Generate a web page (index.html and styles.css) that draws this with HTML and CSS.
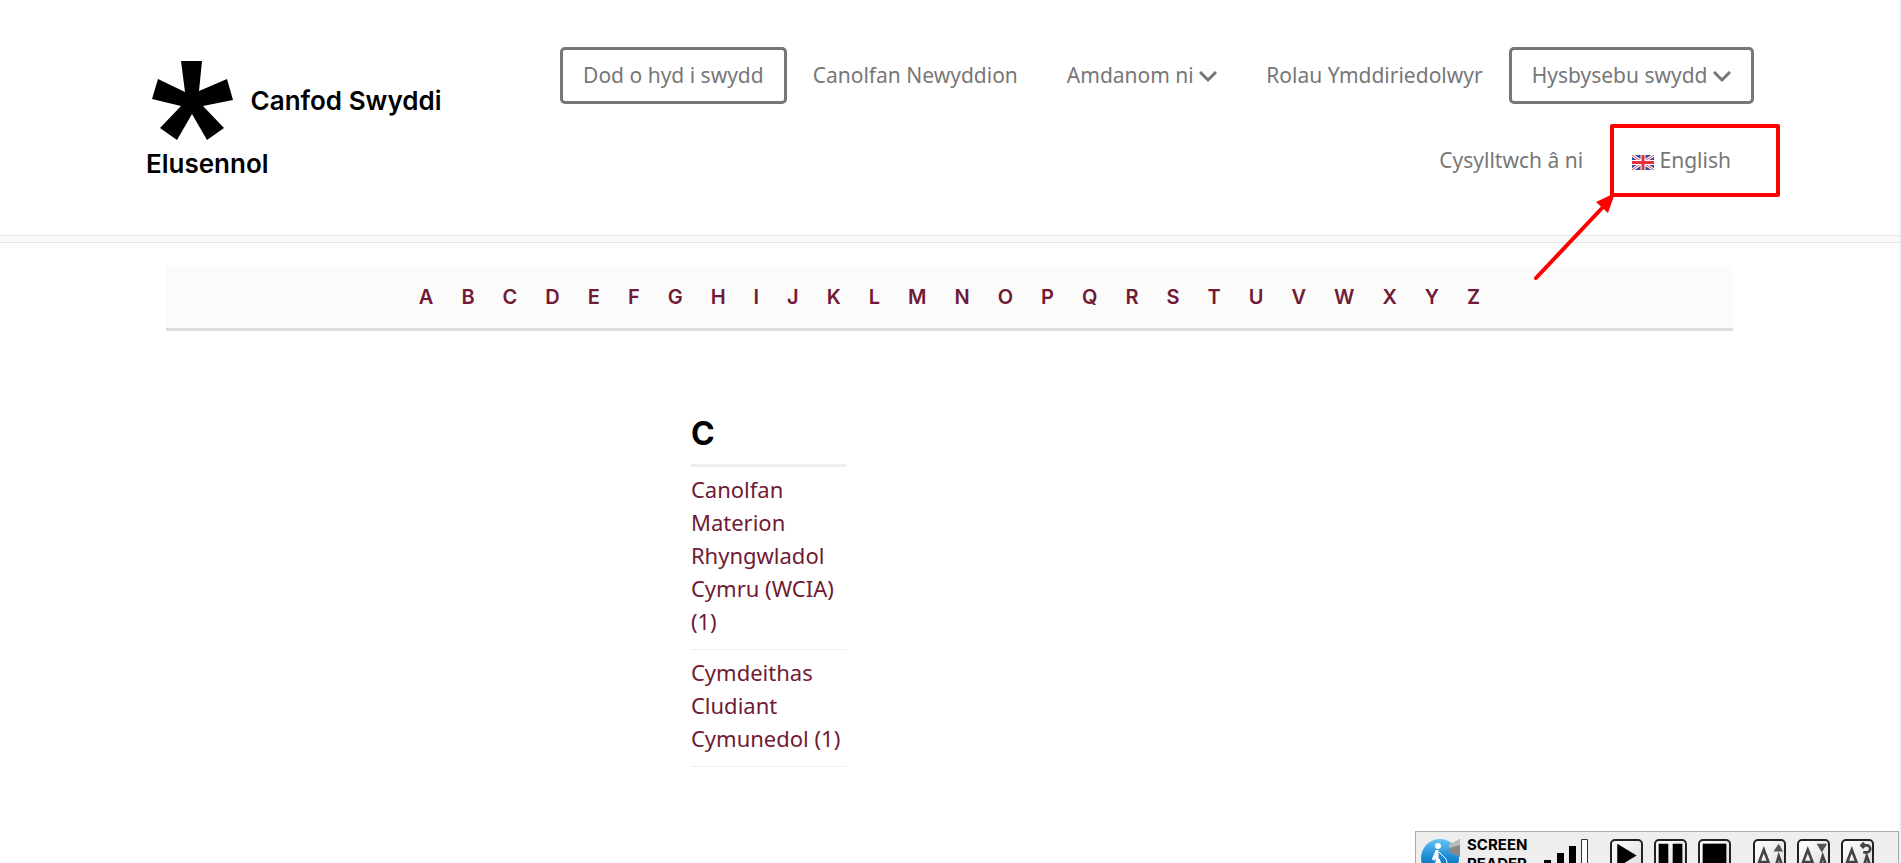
FILE: index.html
```html
<!DOCTYPE html>
<html lang="cy">
<head>
<meta charset="utf-8">
<title>Canfod Swyddi Elusennol</title>
<link rel="stylesheet" href="styles.css">
</head>
<body>
<header class="site-header">
  <div class="header-inner">
    <a class="brand" href="#">
      <svg class="brand-mark" viewBox="0 0 90 90" aria-hidden="true"><path d="M35 7h21l-3 30 28-12 6 21-30 6 21 22-17 12-15-26-15 26-17-12 21-22-29-7 6-20 27 13z"/></svg>
      <span>Canfod Swyddi</span> <span>Elusennol</span>
    </a>
    <nav class="main-nav" aria-label="Prif ddewislen">
      <a class="nav-link boxed" href="#">Dod o hyd i swydd</a>
      <a class="nav-link" href="#">Canolfan Newyddion</a>
      <a class="nav-link" href="#">Amdanom ni <svg class="chevron" viewBox="0 0 18 12" aria-hidden="true"><path d="M1 1l8 8 8-8"/></svg></a>
      <a class="nav-link" href="#">Rolau Ymddiriedolwyr</a>
      <a class="nav-link boxed" href="#">Hysbysebu swydd <svg class="chevron" viewBox="0 0 18 12" aria-hidden="true"><path d="M1 1l8 8 8-8"/></svg></a>
      <a class="nav-link" href="#">Cysylltwch â ni</a>
      <a class="nav-link" href="#"><svg class="flag" viewBox="0 0 22 15" aria-hidden="true"><path fill="#3a4a9c" d="M0 0h22v15H0z"/><path stroke="#fff" stroke-width="3" d="M0 0l22 15M22 0L0 15"/><path stroke="#e8505b" d="M0 0l22 15M22 0L0 15"/><path stroke="#fff" stroke-width="5" d="M11 0v15M0 7.500h22"/><path stroke="#e6303c" stroke-width="3" d="M11 0v15M0 7.500h22"/></svg> English</a>
    </nav>
  </div>
</header>
<main class="page">
  <nav class="letters" aria-label="A–Z">
    <a href="#">A</a><a href="#">B</a><a href="#">C</a><a href="#">D</a><a href="#">E</a><a href="#">F</a><a href="#">G</a><a href="#">H</a><a href="#">I</a><a href="#">J</a><a href="#">K</a><a href="#">L</a><a href="#">M</a><a href="#">N</a><a href="#">O</a><a href="#">P</a><a href="#">Q</a><a href="#">R</a><a href="#">S</a><a href="#">T</a><a href="#">U</a><a href="#">V</a><a href="#">W</a><a href="#">X</a><a href="#">Y</a><a href="#">Z</a>
  </nav>
  <section class="directory">
    <div class="group">
      <h2>C</h2>
      <ul>
        <li><a href="#">Canolfan Materion Rhyngwladol Cymru (WCIA) (1)</a></li>
        <li><a href="#">Cymdeithas Cludiant Cymunedol (1)</a></li>
      </ul>
    </div>
  </section>
</main>
<svg class="callout" viewBox="0 0 250 160" aria-hidden="true"><path fill="none" stroke="#f00" stroke-width="4" stroke-linejoin="round" d="M82 4h166v69H82z"/><path stroke="#f00" stroke-width="4" stroke-linecap="round" d="M6 156L74 84"/><path fill="#f00" d="M85 71l-19 9 12 11z"/></svg>
<aside class="reader" aria-label="Screen reader">
  <svg class="reader-logo" viewBox="0 0 40 40" aria-hidden="true"><defs><linearGradient id="g" x2="0" y2="1"><stop stop-color="#6cc4f2"/><stop offset=".5" stop-color="#1688d4"/><stop offset="1" stop-color="#0b63ad"/></linearGradient></defs><circle cx="19" cy="19" r="19" fill="url(#g)"/><path fill="#888" d="M28 6l11-6v18l-11-5z"/><path fill="#bbb" d="M28 6l11-6v6l-11 3z"/><circle cx="17" cy="7" r="3" fill="#fff"/><path fill="none" stroke="#fff" stroke-width="3" d="M16 11v12l-4 12M17 20l6 14M16 12l-4 9"/><path fill="none" stroke="#fff" d="M18 13l7 7 4 14"/></svg>
  <span class="reader-title">SCREEN READER</span>
  <svg class="volume" viewBox="0 0 45 40" aria-hidden="true"><path d="M0 21h7v19H0zM13 14h7v26h-7zM25 7h7v33h-7z"/><path fill="#fff" stroke="#333" d="M37.500.500h6v39h-6z"/></svg>
  <div class="tools">
    <button type="button" aria-label="Play"><svg viewBox="0 0 33 33"><path d="M6 3l22 13.500L6 30z"/></svg></button>
    <button type="button" aria-label="Pause"><svg viewBox="0 0 33 33"><path d="M3 3h11v27H3zM19 3h11v27H19z"/></svg></button>
    <button type="button" aria-label="Stop"><svg viewBox="0 0 33 33"><path d="M3 3h27v27H3z"/></svg></button>
  </div>
  <div class="tools">
    <button type="button" aria-label="Larger text"><svg viewBox="0 0 33 33"><path class="line" d="M2 31l8-21 8 21M5 24h10M23 31l4-14 5 14M24 26h7"/><path class="soft" d="M21 12l6-9 5 9z"/></svg></button>
    <button type="button" aria-label="Smaller text"><svg viewBox="0 0 33 33"><path class="line" d="M2 31l8-21 8 21M5 24h10M23 31l4-14 5 14M24 26h7"/><path class="soft" d="M20 3h12l-6 10z"/></svg></button>
    <button type="button" aria-label="Reset text"><svg viewBox="0 0 33 33"><path class="line" d="M2 31l8-21 8 21M5 24h10M23 31l4-14 5 14M24 26h7M21 5h6a4 4 0 0 1 0 8h-4M24 2l-3 3 3 3"/></svg></button>
  </div>
</aside>
</body>
</html>
```
FILE: styles.css
```css
* { box-sizing: border-box; }
body {
  margin: 0;
  min-height: 100vh;
  border-right: 2px solid #f1f1f1;
  background: #fff;
  color: #000;
  font-family: "Noto Sans", sans-serif;
}
a { color: inherit; text-decoration: none; }
.site-header {
  padding: 47px 145px 46px 146px;
  border-bottom: 1px solid #e4e4e4;
  box-shadow: 0 6px #fafafa, 0 7px #e4e4e4;
}
.header-inner { display: flex; justify-content: space-between; }
.brand {
  width: 320px;
  font: 600 26px/40px "Inter", sans-serif;
}
.brand-mark { width: 90px; height: 90px; margin: 7px 8px 0 0; vertical-align: -34px; }
.main-nav {
  flex: 1;
  display: flex;
  flex-wrap: wrap;
  justify-content: flex-end;
  align-content: flex-start;
  gap: 28px 3px;
  color: #777;
  font-size: 21px;
  line-height: 27px;
}
.nav-link {
  padding: 12px 20px;
  border: 3px solid transparent;
  border-radius: 5px;
  white-space: nowrap;
}
.boxed { border-color: #777; }
.chevron { width: 18px; height: 12px; fill: none; stroke: #777; stroke-width: 3; }
.flag { width: 22px; height: 15px; vertical-align: -2px; }
.page { padding: 30px 166px 0; }
.letters {
  display: flex;
  justify-content: center;
  gap: 28px;
  padding: 16px;
  border-bottom: 3px solid #ddd;
  background: #fbfbfb;
  color: #701a35;
  font: 600 20px/30px "Inter", sans-serif;
}
.directory { padding: 80px 0 0 33.5%; }
.group { width: 155px; }
.group h2 {
  margin: 0;
  padding-bottom: 8px;
  border-bottom: 3px solid #eee;
  font: 700 32px/45px "Inter", sans-serif;
}
.group ul { margin: 0; padding: 0; list-style: none; }
.group li {
  padding: 6px 0 11px;
  border-bottom: 1px solid #eee;
  color: #701a35;
  font-size: 22px;
  line-height: 33px;
}
.callout { position: absolute; top: 122px; right: 121px; width: 250px; height: 160px; }
.reader {
  position: fixed;
  right: 2px;
  bottom: 0;
  display: flex;
  align-items: flex-start;
  width: 484px;
  height: 32px;
  padding: 7px 0 0 5px;
  overflow: hidden;
  border: 1px solid #aaa;
  border-bottom: 0;
  background: #eee;
}
.reader-logo { flex: none; width: 40px; height: 40px; }
.reader-title { width: 67px; margin: -4px 10px 0 6px; font: 700 15px/19px "Inter", sans-serif; }
.volume { flex: none; width: 45px; height: 40px; margin-right: 21px; }
.tools { display: flex; gap: 11px; margin-right: 22px; }
.tools button {
  width: 33px;
  height: 33px;
  padding: 0;
  border: 2px solid #222;
  border-radius: 5px;
  background: linear-gradient(135deg, #fff, #ddd);
}
.tools svg { display: block; width: 29px; height: 29px; }
.line { fill: none; stroke: #444; stroke-width: 3; }
.soft { fill: #555; }
```
